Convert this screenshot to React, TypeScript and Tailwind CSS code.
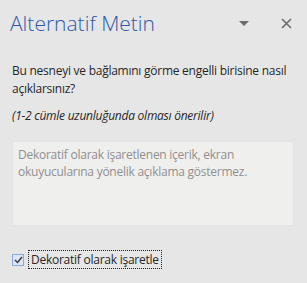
const App = () => (
  <div
    className="relative h-[283px] w-[307px] overflow-hidden bg-[#e6e6e6] text-[#262626]"
    style={{ fontFamily: '"Open Sans", "Noto Sans", sans-serif' }}
  >
    <div className="flex items-center justify-between pl-[10px] pr-[15px] pt-[9px]">
      <h1 className="text-[21px] font-light leading-[28px] text-[#2f5ba6]">Alternatif Metin</h1>
      <div className="flex items-center gap-[32px]">
        <svg width="10" height="6" viewBox="0 0 10 6" className="mt-[2px]">
          <path d="M0 0h10L5 5z" fill="#6b6b6b" />
        </svg>
        <svg width="11" height="11" viewBox="0 0 11 11">
          <path d="M1 1l9 9M10 1l-9 9" stroke="#6b6b6b" strokeWidth="1.6" />
        </svg>
      </div>
    </div>

    <div className="px-[12px] pt-[25px] tracking-[-0.25px]">
      <p className="text-[12px] leading-[18px]">
        Bu nesneyi ve bağlamını görme engelli birisine nasıl açıklarsınız?
      </p>
      <p className="mt-[9px] text-[12px] italic leading-[18px]">(1-2 cümle uzunluğunda olması önerilir)</p>

      <div className="mt-[16px] h-[85px] w-[282px] border border-[#e2e2e2] bg-[#efefee] px-[5px] py-[4px] text-[12px] leading-[17px] text-[#8f8f8f]">
        Dekoratif olarak işaretlenen içerik, ekran okuyucularına yönelik açıklama göstermez.
      </div>

      <label className="mt-[24px] flex items-center gap-[4px] text-[12px]">
        <span className="flex h-[12px] w-[12px] items-center justify-center border border-[#8fa9d6] bg-[#dce6f4]">
          <svg width="9" height="8" viewBox="0 0 9 8">
            <path d="M1 4l2.5 2.5L8 1" stroke="#333" strokeWidth="1.4" fill="none" />
          </svg>
        </span>
        <span className="border border-dotted border-[#222] px-[2px] leading-[17px]">Dekoratif olarak işaretle</span>
      </label>
    </div>
  </div>
)

export default App
